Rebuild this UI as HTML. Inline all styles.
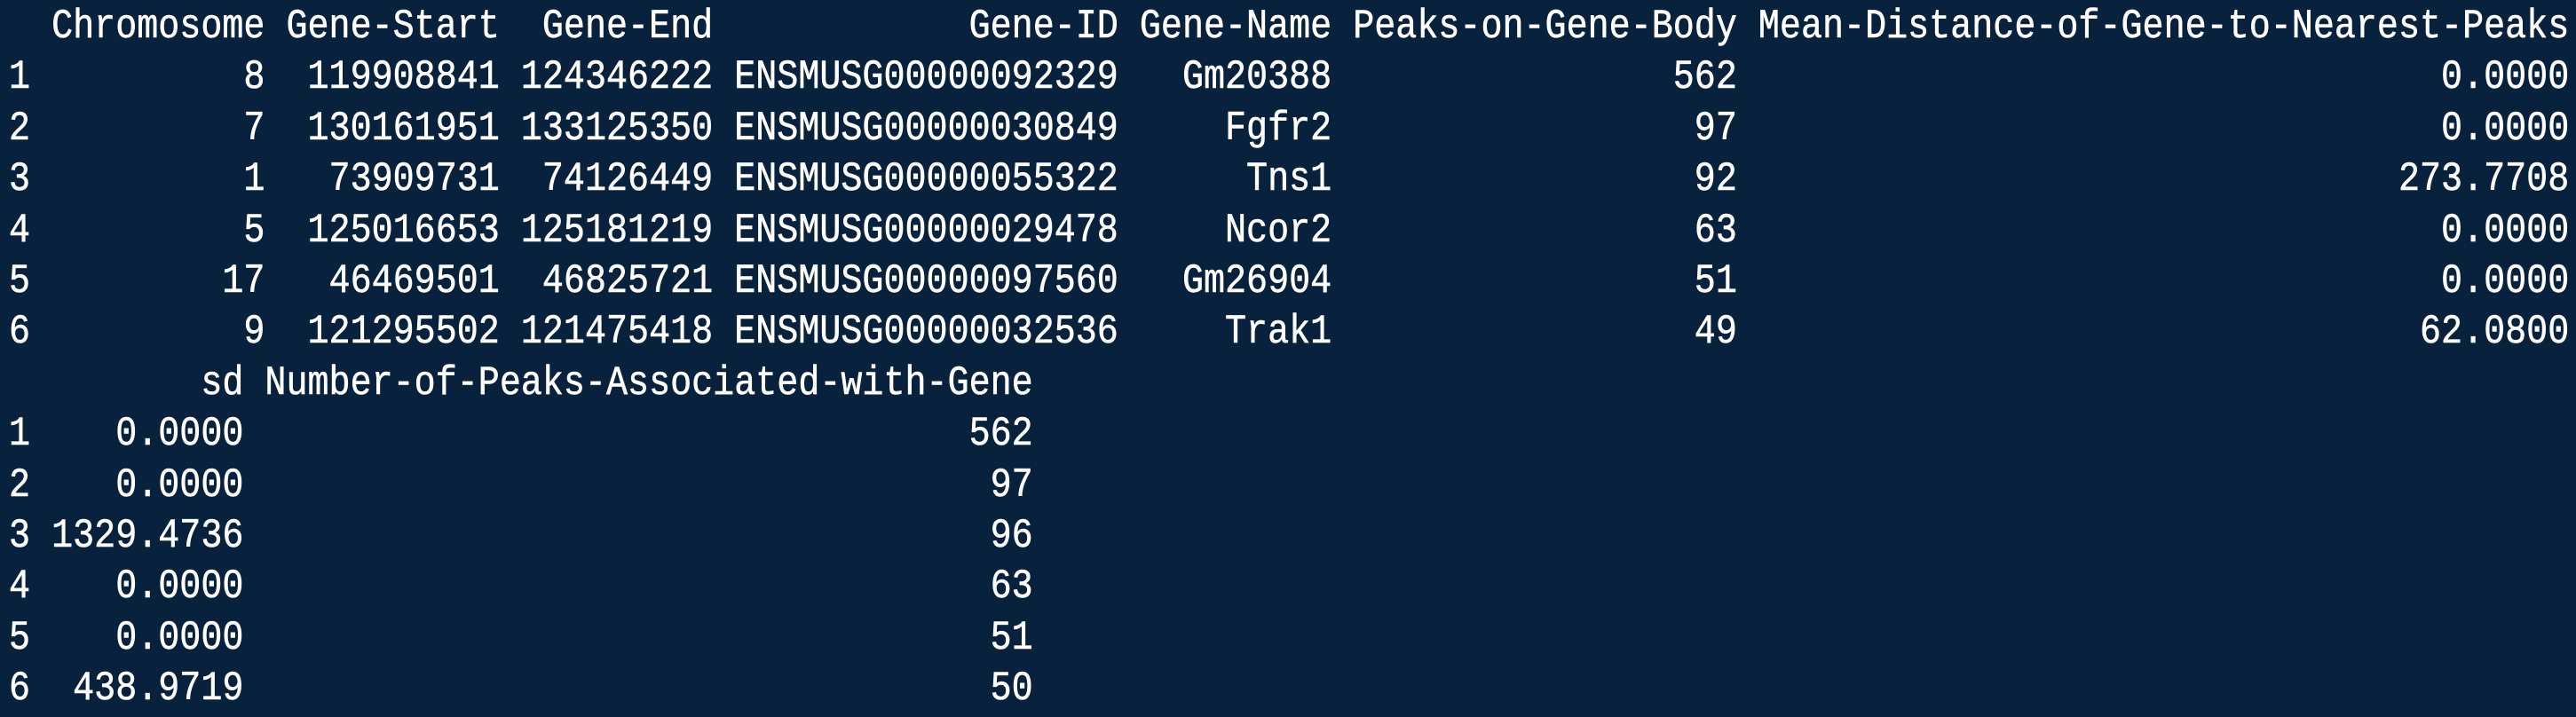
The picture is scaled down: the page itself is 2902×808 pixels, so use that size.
<!DOCTYPE html>
<html><head><meta charset="utf-8"><style>
html,body{margin:0;padding:0;background:#08213d;}
body{width:2902px;height:808px;overflow:hidden;}
pre{margin:0;padding:2px 0 0 11.5px;font-family:"Liberation Mono",monospace;font-size:46px;line-height:57.4px;color:#ffffff;white-space:pre;transform:scaleX(0.8707);transform-origin:0 0;-webkit-text-stroke:0.6px #ffffff;}
</style></head><body><pre>  Chromosome Gene-Start  Gene-End            Gene-ID Gene-Name Peaks-on-Gene-Body Mean-Distance-of-Gene-to-Nearest-Peaks
1          8  119908841 124346222 ENSMUSG00000092329   Gm20388                562                                 0.0000
2          7  130161951 133125350 ENSMUSG00000030849     Fgfr2                 97                                 0.0000
3          1   73909731  74126449 ENSMUSG00000055322      Tns1                 92                               273.7708
4          5  125016653 125181219 ENSMUSG00000029478     Ncor2                 63                                 0.0000
5         17   46469501  46825721 ENSMUSG00000097560   Gm26904                 51                                 0.0000
6          9  121295502 121475418 ENSMUSG00000032536     Trak1                 49                                62.0800
         sd Number-of-Peaks-Associated-with-Gene
1    0.0000                                  562
2    0.0000                                   97
3 1329.4736                                   96
4    0.0000                                   63
5    0.0000                                   51
6  438.9719                                   50
</pre></body></html>
